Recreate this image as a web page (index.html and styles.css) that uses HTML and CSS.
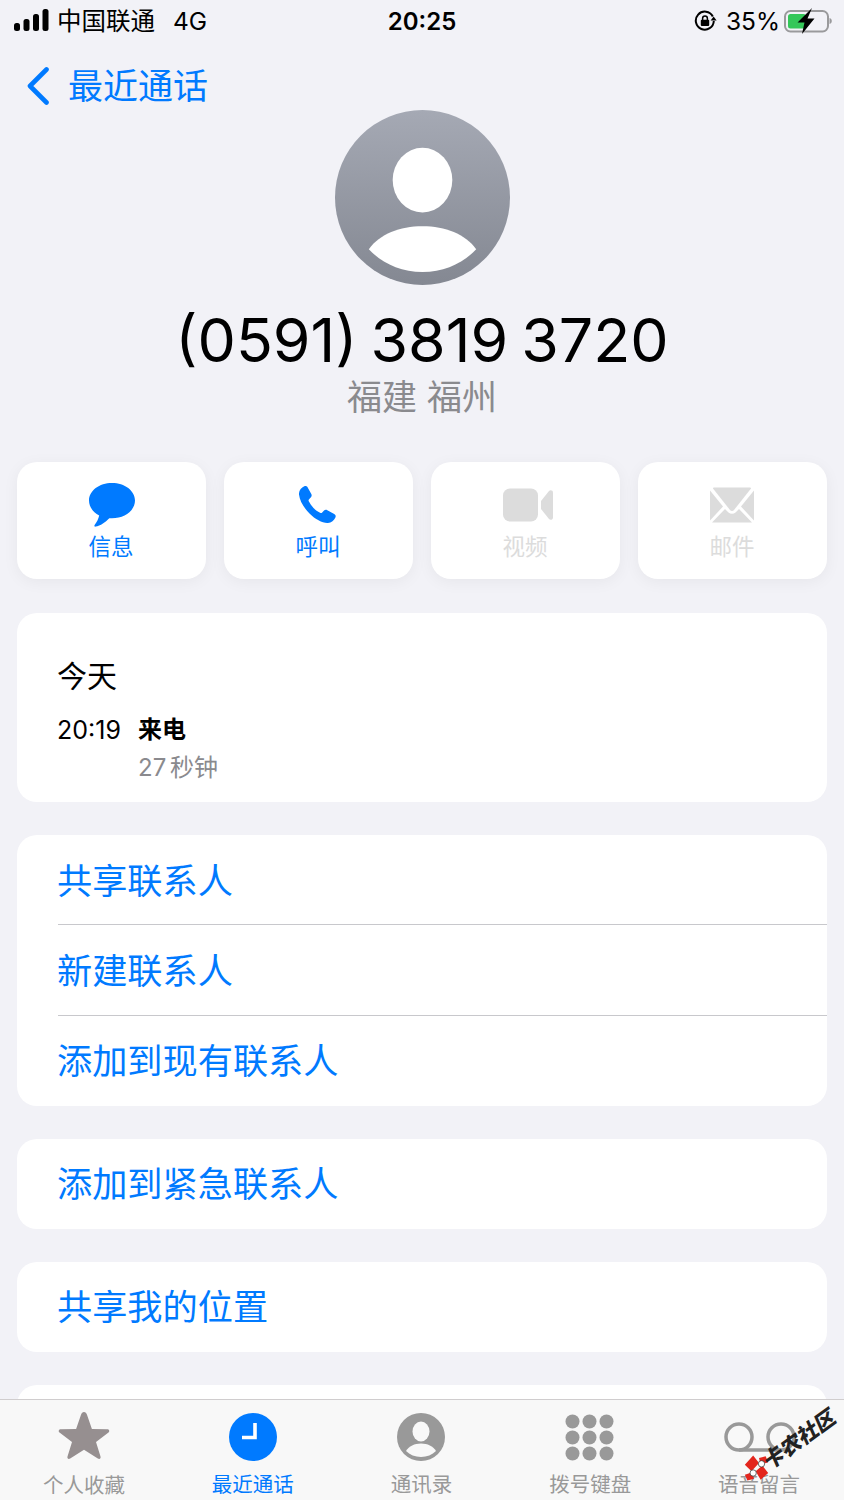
FILE: index.html
```html
<!DOCTYPE html>
<html>
<head>
    <title>最近通话</title>
    <link rel="stylesheet" href="styles.css">
</head>
<body>
    <div class="status-bar">
        <div class="status-left">
            <svg class="signal" width="35" height="22" viewBox="0 0 35 22">
                <rect x="0" y="14" width="6" height="8" rx="2.5" fill="#000"/>
                <rect x="9.5" y="10" width="6" height="12" rx="2.5" fill="#000"/>
                <rect x="19" y="5" width="6" height="17" rx="2.5" fill="#000"/>
                <rect x="28.5" y="0" width="6" height="22" rx="2.5" fill="#000"/>
            </svg>
            <span class="carrier">中国联通</span>
            <span class="network">4G</span>
        </div>
        <div class="status-time">20:25</div>
        <div class="status-right">
            <svg class="lock" width="23" height="22" viewBox="0 0 23 22">
                <path d="M18.8 6.500A9 9 0 1 0 19.800 11" fill="none" stroke="#000" stroke-width="2"/>
                <path d="M16.600 10.500h6l-3-4z" fill="#000"/>
                <rect x="6.800" y="9.800" width="8.400" height="6.200" rx="1" fill="#000"/>
                <path d="M8.600 10V8.400a2.400 2.400 0 0 1 4.800 0V10" fill="none" stroke="#000" stroke-width="1.500"/>
            </svg>
            <span class="percent">35%</span>
            <svg class="battery" width="48" height="26" viewBox="0 0 48 26">
                <rect x="1" y="3" width="43" height="20.500" rx="5.500" fill="none" stroke="#9a9a9c" stroke-width="2"/>
                <path d="M45.500 10c1.500.4 2.300 1.500 2.300 3s-.8 2.600-2.300 3z" fill="#9a9a9c"/>
                <rect x="4" y="6" width="18" height="14.500" rx="2.500" fill="#34c759"/>
                <path d="M28 0 13.500 14.500h7L18 26l12.500-15.500h-7z" fill="#000"/>
            </svg>
        </div>
    </div>

    <div class="nav-bar">
        <svg class="back-icon" width="24" height="38" viewBox="0 0 24 38">
            <path d="M20.500 2.500 4 19l16.500 16.500" fill="none" stroke="#007aff" stroke-width="4.600" stroke-linecap="round" stroke-linejoin="round"/>
        </svg>
        <span class="back-label">最近通话</span>
    </div>

    <div class="header">
        <svg class="avatar" width="175" height="175" viewBox="0 0 176 176">
            <defs>
                <linearGradient id="avatarFill" x1="0" y1="0" x2="0" y2="1">
                    <stop offset="0" stop-color="#a5a9b4"/>
                    <stop offset="1" stop-color="#848892"/>
                </linearGradient>
            </defs>
            <circle cx="88" cy="88" r="88" fill="url(#avatarFill)"/>
            <ellipse cx="88" cy="70.500" rx="30" ry="32.500" fill="#fff"/>
            <path d="M34 140c11-15 31-23 54-23s43 8 54 23c-13 14-32 23-54 23s-41-9-54-23z" fill="#fff"/>
        </svg>
        <div class="phone-number">(0591) 3819 3720</div>
        <div class="location">福建 福州</div>
    </div>

    <div class="actions">
        <div class="action">
            <svg class="message-icon" width="46" height="44" viewBox="0 0 46 44">
                <path d="M23 0C10.300 0 0 7.800 0 17.600c0 6.200 4 11.600 10.200 14.800-.6 3-2.500 6.800-4.600 9.600-.5.800 0 1.800 1 1.600 4.600-.7 10.400-4.800 13.700-8.400.9.100 1.800.1 2.700.1 12.700 0 23-7.900 23-17.700S35.700 0 23 0z" fill="#007aff"/>
            </svg>
            <span class="action-label">信息</span>
        </div>
        <div class="action">
            <svg width="38" height="38" viewBox="0 0 38 38">
                <path d="M5.300.3C6.800-.4 8 .2 8.700 1.500l3.600 6.600c.7 1.300.4 2.500-.6 3.500l-1.600 1.600c-.6.600-.7 1.300-.3 2.100 1.200 2.500 2.800 4.700 4.700 6.700 2 2 4.100 3.500 6.600 4.700.8.400 1.500.3 2.100-.3l1.600-1.600c1-1 2.200-1.300 3.500-.6l6.900 3.800c1.300.7 1.900 1.900 1.200 3.400-1.300 3-4 5.300-7.500 5.500-5.500.3-12.400-3.300-18.400-9.300C4.500 21.500.7 14.500 0 8.500-.3 5 2 1.800 5.300.3z" fill="#007aff"/>
            </svg>
            <span class="action-label">呼叫</span>
        </div>
        <div class="action disabled">
            <svg class="video-icon" width="50" height="33" viewBox="0 0 50 33">
                <rect x="0" y="0" width="35" height="33" rx="7" fill="#dcdcdc"/>
                <path d="M38 12.500 46 2.500c1.300-1.500 4-.8 4 1.500v25c0 2.300-2.700 3-4 1.500l-8-10z" fill="#dcdcdc"/>
            </svg>
            <span class="action-label">视频</span>
        </div>
        <div class="action disabled">
            <svg width="44" height="35" viewBox="0 0 44 35">
                <path d="M4 0h36c.8 0 1.200.3 1 1L24 22.500c-1 1.200-3 1.200-4 0L3 1c-.2-.7.200-1 1-1z" fill="#dcdcdc"/>
                <path d="M0 3 13 19 0 33zM44 3 31 19l13 14z" fill="#dcdcdc"/>
                <path d="M2 35 15 21.500l3.500 3.500c2 1.700 5 1.700 7 0l3.500-3.500L42 35z" fill="#dcdcdc"/>
            </svg>
            <span class="action-label">邮件</span>
        </div>
    </div>

    <div class="card history">
        <div class="history-day">今天</div>
        <div class="history-row">
            <span class="history-time">20:19</span>
            <div>
                <div class="history-type">来电</div>
                <div class="history-length">27 秒钟</div>
            </div>
        </div>
    </div>

    <div class="card">
        <div class="list-row">共享联系人</div>
        <div class="list-row">新建联系人</div>
        <div class="list-row">添加到现有联系人</div>
    </div>
    <div class="card">
        <div class="list-row">添加到紧急联系人</div>
    </div>
    <div class="card">
        <div class="list-row">共享我的位置</div>
    </div>
    <div class="card">
        <div class="list-row">阻止此来电号码</div>
    </div>

    <div class="tab-bar">
        <div class="tab">
            <div class="tab-icon">
                <svg width="52" height="50" viewBox="0 0 52 50">
                    <path d="M26 0c1.500 0 2.300 1 2.900 2.600l5 14.400 15.300.3c2 0 2.800 2 1.300 3.300L38 29.900l4.500 14.700c.6 2-1 3.200-2.700 2L26 37.800 12.200 46.600c-1.700 1.200-3.300 0-2.700-2L14 29.900 1.500 20.600C0 19.300.8 17.300 2.800 17.300l15.300-.3 5-14.400C23.700 1 24.500 0 26 0z" fill="#968f90"/>
                </svg>
            </div>
            <span class="tab-label">个人收藏</span>
        </div>
        <div class="tab active">
            <div class="tab-icon">
                <svg width="48" height="48" viewBox="0 0 48 48">
                    <circle cx="24" cy="24" r="24" fill="#007aff"/>
                    <path d="M26 10v14.500H13" fill="none" stroke="#fff" stroke-width="3.600"/>
                </svg>
            </div>
            <span class="tab-label">最近通话</span>
        </div>
        <div class="tab">
            <div class="tab-icon">
                <svg class="contacts-icon" width="48" height="48" viewBox="0 0 48 48">
                    <circle cx="24" cy="24" r="24" fill="#999"/>
                    <ellipse cx="24" cy="18.500" rx="8.500" ry="10" fill="#f8f8f8"/>
                    <path d="M9 38c3-4.800 8.500-7.500 15-7.500S36 33.200 39 38c-3.800 3.900-9 6-15 6s-11.200-2.100-15-6z" fill="#f8f8f8"/>
                </svg>
            </div>
            <span class="tab-label">通讯录</span>
        </div>
        <div class="tab">
            <div class="tab-icon">
                <svg class="keypad-icon" width="49" height="47" viewBox="0 0 49 47">
                    <g fill="#999">
                        <circle cx="7.500" cy="7.500" r="7"/><circle cx="24.500" cy="7.500" r="7"/><circle cx="41.500" cy="7.500" r="7"/>
                        <circle cx="7.500" cy="23.500" r="7"/><circle cx="24.500" cy="23.500" r="7"/><circle cx="41.500" cy="23.500" r="7"/>
                        <circle cx="7.500" cy="39.500" r="7"/><circle cx="24.500" cy="39.500" r="7"/><circle cx="41.500" cy="39.500" r="7"/>
                    </g>
                </svg>
            </div>
            <span class="tab-label">拨号键盘</span>
        </div>
        <div class="tab">
            <div class="tab-icon">
                <svg class="voicemail-icon" width="72" height="30" viewBox="0 0 72 30">
                    <circle cx="15" cy="15" r="13" fill="none" stroke="#999" stroke-width="3.500"/>
                    <circle cx="57" cy="15" r="13" fill="none" stroke="#999" stroke-width="3.500"/>
                    <path d="M15 28h42" fill="none" stroke="#999" stroke-width="3.500"/>
                </svg>
            </div>
            <span class="tab-label">语音留言</span>
        </div>
    </div>

    <svg class="watermark-bow" width="25" height="26" viewBox="0 0 30 30">
        <path d="M1 11 11 0l7 9-9 10zM29 21l-9 8-6-10 8-7zM18 3l8-2 3 7-9 3zM12 28l-8 2-3-7 9-3z" fill="#e3261d"/>
        <circle cx="11" cy="21" r="3.800" fill="#fff" stroke="#222" stroke-width=".8"/>
        <circle cx="21" cy="10" r="3.800" fill="#fff" stroke="#222" stroke-width=".8"/>
    </svg>
    <span class="watermark-text">卡农社区</span>
</body>
</html>
```

FILE: styles.css
```css
* {
    box-sizing: border-box;
}
html, body {
    height: 1500px;
    overflow: hidden;
}
body {
    margin: 0;
    position: relative;
    background-color: #f2f2f7;
    color: #000;
    font-family: Inter, "Noto Sans CJK SC", sans-serif;
}
svg {
    display: block;
}

.status-bar {
    height: 42px;
    padding: 0 12px 0 14px;
    display: grid;
    grid-template-columns: 1fr auto 1fr;
    align-items: center;
    font-size: 24.500px;
}
.status-left {
    display: flex;
    align-items: center;
}
.signal {
    margin-bottom: 2px;
}
.carrier {
    margin: 0 0 4px 8px;
}
.network {
    margin-left: 18px;
}
.status-time {
    margin-right: 2px;
    font-size: 24px;
    font-weight: 600;
}
.status-right {
    display: flex;
    align-items: center;
    justify-content: flex-end;
}
.percent {
    margin: 0 4px 0 9px;
}

.nav-bar {
    height: 68px;
    padding: 20px 0 0 26px;
    display: flex;
    align-items: center;
    color: #007aff;
}
.back-label {
    margin: 0 0 6px 18px;
    font-size: 35px;
}

.header {
    display: flex;
    flex-direction: column;
    align-items: center;
}
.phone-number {
    margin-top: 15px;
    font-size: 60.800px;
    word-spacing: -4px;
    line-height: 80px;
}
.location {
    margin-top: -6px;
    font-size: 35px;
    line-height: 46px;
    color: #8a8a8e;
}

.actions {
    margin: 42px 17px 0;
    display: grid;
    grid-template-columns: repeat(4, 1fr);
    gap: 18px;
}
.action {
    height: 117px;
    padding-top: 21px;
    display: flex;
    flex-direction: column;
    align-items: center;
    border-radius: 20px;
    background-color: #fff;
    box-shadow: 0 3px 16px rgba(0, 0, 0, 0.05);
    color: #007aff;
}
.action svg {
    height: 44px;
    margin-right: 2px;
}
.action .message-icon {
    margin-right: 0;
}
.action .video-icon {
    margin: 0 0 0 5px;
}
.action-label {
    margin: 4px 1px 0 0;
    font-size: 22.500px;
    line-height: 32px;
}
.disabled {
    color: #dcdcdc;
}

.card {
    margin: 33px 17px 0;
    border-radius: 20px;
    background-color: #fff;
    overflow: hidden;
}
.list-row {
    height: 90.330px;
    margin-left: 41px;
    padding-bottom: 2px;
    display: flex;
    align-items: center;
    text-indent: -1px;
    font-size: 35.200px;
    color: #007aff;
    border-bottom: 1px solid #c8c8cc;
}
.list-row:last-child {
    padding-bottom: 4px;
    border-bottom: none;
}
.list-row:only-child {
    height: 90px;
}

.history {
    height: 189px;
    margin-top: 34px;
    padding: 42px 40px 0;
}
.history-day {
    font-size: 30px;
    line-height: 42px;
}
.history-row {
    margin-top: 17px;
    display: flex;
}
.history-time {
    width: 81px;
    font-size: 25px;
    line-height: 32px;
}
.history-type {
    font-size: 24px;
    font-weight: 600;
    line-height: 32px;
}
.history-length {
    margin-top: 6px;
    font-size: 24px;
    word-spacing: -3px;
    line-height: 32px;
    color: #8a8a8e;
}

.tab-bar {
    position: absolute;
    left: 0;
    right: 0;
    bottom: 0;
    height: 101px;
    display: flex;
    padding-top: 12px;
    background-color: #f8f8f8;
    border-top: 1px solid #d0cdce;
}
.tab {
    flex: 1;
    display: flex;
    flex-direction: column;
    align-items: center;
    color: #999;
}
.tab-icon {
    height: 50px;
    display: flex;
    align-items: flex-end;
}
.contacts-icon, .keypad-icon {
    margin-right: 2px;
}
.voicemail-icon {
    margin-bottom: 9px;
}
.tab-label {
    margin-top: 9px;
    margin-right: 1px;
    font-size: 20.500px;
    line-height: 30px;
}
.active {
    color: #007aff;
}

.watermark-bow {
    position: absolute;
    left: 744px;
    top: 1455px;
}
.watermark-text {
    position: absolute;
    left: 766px;
    top: 1450px;
    font-size: 21px;
    font-weight: 900;
    line-height: 28px;
    white-space: nowrap;
    color: #222;
    transform: rotate(-36deg) skewX(-12deg);
    transform-origin: 0 50%;
}
```
